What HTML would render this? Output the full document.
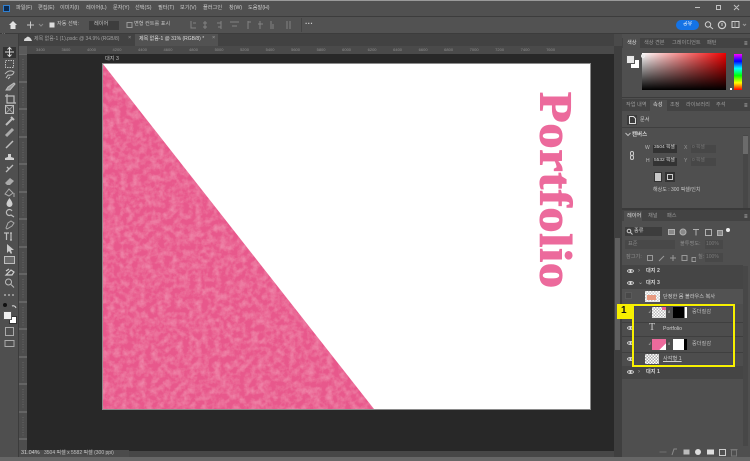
<!DOCTYPE html>
<html lang="ko"><head><meta charset="utf-8"><style>
html,body{margin:0;padding:0;width:750px;height:461px;overflow:hidden;background:#4a4a4a}
*{box-sizing:border-box}
#r{position:relative;width:750px;height:461px;overflow:hidden;font-family:"Liberation Sans","Noto Sans CJK KR",sans-serif;color:#cfcfcf;font-size:5.500px}
.a{position:absolute}
.t{position:absolute;white-space:nowrap;line-height:1;filter:blur(.35px)}
.ic{filter:blur(.35px)}
.eye{position:absolute;width:7px;height:4px;border:1px solid #cfcfcf;border-radius:50%;background:radial-gradient(circle,#ddd 1px,transparent 1.2px);filter:blur(.3px)}
.sep{position:absolute;height:1px;background:#3f3f3f}
.m{font-size:5.200px;color:#cfcfcf;top:6px}
</style></head><body><div id="r">

<!-- top bars -->
<div class="a" style="left:0;top:0;width:750px;height:1px;background:#9a9a9a"></div>
<div class="a" style="left:0;top:1px;width:750px;height:15px;background:#505050"></div>
<div class="a" style="left:0;top:16px;width:750px;height:1px;background:#3c3c3c"></div>
<div class="a" style="left:0;top:17px;width:750px;height:16px;background:#525252"></div>
<div class="a" style="left:0;top:33px;width:750px;height:1px;background:#3c3c3c"></div>
<div class="a" style="left:3px;top:5px;width:7px;height:7px;background:#0b2a50;border:1px solid #2f7fd0"></div>
<div class="t m" style="left:16px">파일(F)</div>
<div class="t m" style="left:38px">편집(E)</div>
<div class="t m" style="left:60px">이미지(I)</div>
<div class="t m" style="left:86px">레이어(L)</div>
<div class="t m" style="left:113px">문자(Y)</div>
<div class="t m" style="left:135px">선택(S)</div>
<div class="t m" style="left:158px">필터(T)</div>
<div class="t m" style="left:180px">보기(V)</div>
<div class="t m" style="left:203px">플러그인</div>
<div class="t m" style="left:229px">창(W)</div>
<div class="t m" style="left:248px">도움말(H)</div>
<svg class="a ic" style="left:695px;top:3px" width="45" height="10" fill="none" stroke="#c0c0c0"><path d="M0 4.500h5M21.500 2.500h4v4h-4zM39 2l5 5M44 2l-5 5"/></svg>

<!-- options -->
<svg class="a ic" style="left:0;top:17px" width="300" height="16" fill="none" stroke="#c8c8c8">
<path d="M9 8l4-4 4 4h-1.500v4h-5v-4z" fill="#e2e2e2" stroke="none"/>
<path d="M27 8h7M30.500 4.500v7"/>
<path d="M39 7l2 2 2-2" stroke="#888"/>
<rect x="49.500" y="5.500" width="5" height="5" fill="#ddd" stroke="none"/>
<rect x="127" y="5.500" width="5" height="5" stroke="#999"/>
<path d="M191 4v7h5M193 6h3M205 4v8M203 6h4M203 10h4M221 4v8M217 6h4M218 10h3M230 5h9M232 9h5M248 4v8M248 5h3M260 4v8M258 7h5M271 4v8M273 7v5M287 4v8M290 4v8" stroke="#828282"/>
</svg>
<div class="a" style="left:89px;top:21px;width:30px;height:9px;background:#3d3d3d"></div>
<div class="t" style="left:57px;top:22px;color:#c8c8c8;font-size:5.200px">자동 선택:</div>
<div class="t" style="left:94px;top:22px;color:#c8c8c8;font-size:5.200px">레이어</div>
<div class="t" style="left:134px;top:22px;color:#c0c0c0;font-size:5.200px">변형 컨트롤 표시</div>
<div class="t" style="left:305px;top:20px;font-size:8px;color:#ccc;font-weight:bold">···</div>
<div class="a" style="left:301px;top:18px;width:1px;height:14px;background:#444"></div>
<div class="a" style="left:676px;top:20px;width:23px;height:10px;border-radius:5px;background:#1473e6"></div>
<div class="t" style="left:683px;top:22px;color:#fff;font-size:5px">공유</div>
<svg class="a ic" style="left:702px;top:18px" width="48" height="14" fill="none" stroke="#cfcfcf"><circle cx="6" cy="6.500" r="2.700"/><path d="M8 8.500l3 2.500"/><circle cx="20" cy="7" r="3.600" stroke-width="1.200"/><path d="M20 5v3"/><rect x="30" y="3.500" width="7" height="6"/><path d="M33 3.500v6M41 6l1.500 1.500L44 6" stroke="#999"/></svg>

<!-- tabs -->
<div class="a" style="left:0;top:34px;width:614px;height:12px;background:#424242"></div>
<div class="a" style="left:135px;top:34px;width:83px;height:12px;background:#525252"></div>
<svg class="a" style="left:23px;top:35px" width="10" height="8"><path d="M1 6q0-3 2-3q1-2 3-1q2 1 3 4z" fill="#d8d8d8"/></svg>
<div class="t" style="left:34px;top:37px;font-size:5px;color:#a0a0a0">제목 없음-1 (1).psdc @ 34.9% (RGB/8)</div>
<div class="t" style="left:128px;top:36px;color:#999">×</div>
<div class="t" style="left:139px;top:37px;font-size:5px;color:#dedede">제목 없음-1 @ 31% (RGB/8) *</div>
<div class="t" style="left:212px;top:36px;color:#a0a0a0">×</div>
<div class="t" style="left:2px;top:32px;color:#ccc;font-size:5px">··</div>

<!-- toolbar -->
<div class="a" style="left:0;top:34px;width:19px;height:427px;background:#4f4f4f;border-right:1px solid #3c3c3c"></div>
<div class="a" style="left:3px;top:47px;width:13px;height:11px;background:#333"></div>
<svg class="a ic" style="left:0;top:44px" width="19" height="310" fill="none" stroke="#bdbdbd" stroke-width="1">
<path d="M5 8h9M9.500 3.500v9M7.500 5.500l2-2 2 2M7.500 10.500l2 2 2-2" stroke="#d8d8d8"/>
<rect x="5.500" y="16.500" width="8" height="7" stroke-dasharray="1.500 1"/>
<path d="M5 30q4-5 9-2q-1 4-6 3l-2 3M8 35l2-2"/>
<path d="M6 46l2-3 6-4 1 1-5 6z" fill="#999"/>
<path d="M7 50v9h9M5 52h9v7" stroke-width="1.200"/>
<rect x="5.500" y="61.500" width="8" height="8"/><path d="M6 62l7 7M13 62l-7 7" stroke="#999"/>
<path d="M6 81l6-6M11 73l3 3" stroke-width="2"/>
<path d="M6 92l7-7" stroke-width="3" stroke="#aaa"/>
<path d="M6 104l7-7" stroke-width="1.500"/>
<path d="M5 116h9v-2l-3-1v-3h-3v3l-3 1z" fill="#cfcfcf" stroke="none"/>
<path d="M6 128l7-7M7 123l2 2" stroke-width="1.300"/>
<path d="M5 139l5-5 4 3-4 4H7z" fill="#aaa" stroke="none"/>
<path d="M5 150l4-5 4 4-4 3zM14 149v4" stroke="#aaa"/>
<path d="M9.500 154q-3 4-3 6a3 3 0 0 0 6 0q0-2-3-6z" fill="#cfcfcf" stroke="none"/>
<path d="M12 167a3 3 0 1 0-1 4l3 2" stroke-width="1.200"/>
<path d="M6 184l2-5 3-2 3 2-2 3-5 3z" stroke="#aaa"/>
<path d="M4 189h5M6.500 189v7M11 189v7M10 189h2M10 196h2" stroke-width="1.200"/>
<path d="M7 200v9l2-2 2 3 1-1-1-3h3z" fill="#c8c8c8" stroke="none"/>
<rect x="4.500" y="212.500" width="10" height="7" fill="#6a6a6a"/>
<path d="M6 231l5-5 3 2-2 3zM6 227l3-2" stroke="#cfcfcf" stroke-width="1.200"/>
<circle cx="8.500" cy="238" r="3"/><path d="M11 240.500l3 3"/>
<path d="M4 251h2M8 251h2M12 251h2" stroke-width="1.200"/>
<path d="M12 262a3 3 0 0 1 4 2" stroke="#ddd"/>
<rect x="5.500" y="283.500" width="8" height="8" stroke="#aaa"/>
<rect x="5" y="296.500" width="9" height="6" stroke="#aaa"/>
</svg>
<div class="a" style="left:3px;top:303px;width:4px;height:4px;border-radius:50%;background:#111"></div>
<div class="a" style="left:9px;top:316px;width:8px;height:8px;background:#fff;border:1px solid #333"></div>
<div class="a" style="left:3px;top:311px;width:9px;height:9px;background:#efefef;border:1px solid #555"></div>

<!-- rulers -->
<div class="a" style="left:19px;top:46px;width:595px;height:8px;background:#4a4a4a"></div>
<div class="a" style="left:19px;top:46px;width:8px;height:415px;background:#4d4d4d"></div>
<div class="a" style="left:19px;top:46px;width:8px;height:8px;background:#5a5a5a"></div>
<div class="t" style="left:36px;top:48px;font-size:4px;color:#8f8f8f;word-spacing:15.500px">3400 3600 4000 4200 4400 4600 4800 5000 5200 5400 5600 5800 6000 6200 6400 6600 6800 7000 7200 7400 7600</div>
<svg class="a" style="left:19px;top:54px" width="8" height="395" stroke="#7c7c7c"><path d="M0 0h8M0 28h8M0 55h8M0 83h8M0 110h8M0 138h8M0 165h8M0 193h8M0 220h8M0 248h8M0 275h8M0 303h8M0 330h8M0 358h8M0 385h8"/><path d="M4 5v20M4 33v20M4 60v20M4 88v20M4 115v20M4 143v20M4 170v20M4 198v20M4 225v20M4 253v20M4 280v20M4 308v20M4 335v20M4 363v20" stroke="#666" stroke-dasharray="1 1.500"/></svg>

<!-- canvas area -->
<div class="a" style="left:27px;top:54px;width:587px;height:397px;background:#282828"></div>
<div class="t" style="left:105px;top:57px;font-size:5.200px;color:#c5c5c5">대지 3</div>
<svg class="a" style="left:102px;top:63px" width="490" height="348">
<defs><filter id="n" x="0" y="0" width="100%" height="100%"><feTurbulence type="fractalNoise" baseFrequency=".16" numOctaves="4" seed="4"/><feColorMatrix values="0 0 0 0 1  0 0 0 0 .6  0 0 0 0 .75  .55 0 0 0 -.2"/><feComposite in2="SourceGraphic" operator="in"/><feMerge><feMergeNode in="SourceGraphic"/><feMergeNode/></feMerge></filter></defs>
<rect x="0" y="0" width="489" height="347" fill="#8a8a8a"/>
<rect x="1" y="1" width="487" height="345" fill="#fff"/>
<path d="M1 1V346H272Z" fill="#e8598c" filter="url(#n)"/>
</svg>
<div class="t" style="left:579px;top:92px;font:bold 50px/1 'Liberation Serif',serif;color:#ec6a9c;transform-origin:0 0;transform:rotate(90deg) scaleY(.92);letter-spacing:.9px;-webkit-text-stroke:1.200px #ec6a9c;filter:none">Portfolio</div>

<!-- status -->
<div class="a" style="left:19px;top:451px;width:595px;height:6px;background:#474747"></div>
<div class="a" style="left:19px;top:450px;width:110px;height:8px;background:#4b4b4b"></div>
<div class="t" style="left:21px;top:451px;font-size:5.500px;color:#d5d5d5">31.04%</div>
<div class="t" style="left:44px;top:451px;font-size:5px;color:#c0c0c0">3504 픽셀 x 5582 픽셀 (300 ppi)</div>
<div class="a" style="left:0;top:457px;width:750px;height:4px;background:#666"></div>

<!-- scrollbar + panel column -->
<div class="a" style="left:614px;top:46px;width:8px;height:411px;background:#3f3f3f"></div>
<div class="a" style="left:615px;top:238px;width:5px;height:112px;background:#5f5f5f"></div>
<div class="a" style="left:622px;top:34px;width:128px;height:423px;background:#4f4f4f"></div>

<!-- color panel -->
<div class="a" style="left:622px;top:38px;width:128px;height:10px;background:#434343"></div>
<div class="a" style="left:623px;top:38px;width:17px;height:10px;background:#4f4f4f"></div>
<div class="t" style="left:627px;top:41px;font-size:5.200px;color:#e0e0e0">색상</div>
<div class="t" style="left:644px;top:41px;font-size:5.200px;color:#9c9c9c">색상 견본</div>
<div class="t" style="left:672px;top:41px;font-size:5.200px;color:#9c9c9c">그레이디언트</div>
<div class="t" style="left:707px;top:41px;font-size:5.200px;color:#9c9c9c">패턴</div>
<div class="t" style="left:744px;top:41px;color:#ccc;font-size:6px">≡</div>
<div class="a" style="left:631px;top:60px;width:8px;height:8px;background:#fff"></div>
<div class="a" style="left:626px;top:55px;width:9px;height:9px;background:#e8e8e8;border:1px solid #555"></div>
<div class="a" style="left:642px;top:53px;width:84px;height:37px;background:linear-gradient(to top,#000,transparent),linear-gradient(to right,#fff,#e00)"></div>
<div class="a" style="left:641px;top:54px;width:4px;height:4px;border:1px solid #eee;border-radius:50%"></div>
<div class="a" style="left:730px;top:88px;width:2px;height:2px;background:#fff"></div>
<div class="a" style="left:734px;top:54px;width:8px;height:36px;background:linear-gradient(to bottom,#f0f,#00f,#0ff,#0f0,#ff0,#f00)"></div>
<div class="a" style="left:622px;top:97px;width:128px;height:1px;background:#3c3c3c"></div>

<!-- properties -->
<div class="a" style="left:622px;top:99px;width:128px;height:12px;background:#434343"></div>
<div class="a" style="left:650px;top:100px;width:17px;height:11px;background:#4f4f4f"></div>
<div class="t" style="left:626px;top:103px;font-size:5.200px;color:#9c9c9c">작업 내역</div>
<div class="t" style="left:653px;top:103px;font-size:5.200px;color:#e0e0e0">속성</div>
<div class="t" style="left:670px;top:103px;font-size:5.200px;color:#9c9c9c">조정</div>
<div class="t" style="left:686px;top:103px;font-size:5.200px;color:#9c9c9c">라이브러리</div>
<div class="t" style="left:716px;top:103px;font-size:5.200px;color:#9c9c9c">주석</div>
<div class="t" style="left:744px;top:103px;color:#ccc;font-size:6px">≡</div>
<div class="a" style="left:627px;top:115px;width:10px;height:10px;background:#3c3c3c"></div>
<svg class="a ic" style="left:629px;top:116px" width="7" height="8" fill="none" stroke="#ddd"><path d="M.5.500h4l2 2v5h-6z"/></svg>
<div class="t" style="left:640px;top:118px;font-size:5.200px;color:#cfcfcf">문서</div>
<div class="a" style="left:622px;top:127px;width:128px;height:1px;background:#3f3f3f"></div>
<svg class="a ic" style="left:625px;top:132px" width="6" height="5" fill="none" stroke="#bbb"><path d="M.5 1l2.500 2.500L5.500 1"/></svg>
<div class="t" style="left:632px;top:133px;font-size:5.500px;font-weight:bold;color:#d4d4d4">캔버스</div>
<div class="t" style="left:645px;top:146px;font-size:5px;color:#bbb">W</div>
<div class="t" style="left:646px;top:159px;font-size:5px;color:#bbb">H</div>
<div class="a" style="left:653px;top:145px;width:24px;height:8px;background:#333"></div>
<div class="a" style="left:653px;top:158px;width:24px;height:8px;background:#333"></div>
<div class="t" style="left:654px;top:146px;font-size:4.800px;color:#d8d8d8">3504 픽셀</div>
<div class="t" style="left:654px;top:159px;font-size:4.800px;color:#d8d8d8">5532 픽셀</div>
<div class="t" style="left:684px;top:146px;font-size:5px;color:#999">X</div>
<div class="t" style="left:684px;top:159px;font-size:5px;color:#999">Y</div>
<div class="a" style="left:691px;top:145px;width:25px;height:8px;background:#474747"></div>
<div class="a" style="left:691px;top:158px;width:25px;height:8px;background:#474747"></div>
<div class="t" style="left:692px;top:146px;font-size:4.800px;color:#777">0 픽셀</div>
<div class="t" style="left:692px;top:159px;font-size:4.800px;color:#777">0 픽셀</div>
<svg class="a ic" style="left:629px;top:151px" width="6" height="9" fill="none" stroke="#ccc"><rect x="1.500" y=".5" width="3" height="4" rx="1.500"/><rect x="1.500" y="4.500" width="3" height="4" rx="1.500"/></svg>
<div class="a" style="left:654px;top:172px;width:8px;height:10px;background:#c8c8c8;border:1px solid #333"></div>
<div class="a" style="left:665px;top:172px;width:10px;height:10px;background:#333"></div>
<div class="a" style="left:667px;top:174px;width:6px;height:6px;border:1px solid #ccc"></div>
<div class="t" style="left:653px;top:188px;font-size:5px;color:#c8c8c8">해상도 : 300 픽셀/인치</div>
<div class="a" style="left:743px;top:135px;width:5px;height:73px;background:#474747"></div>
<div class="a" style="left:743px;top:136px;width:5px;height:18px;background:#6b6b6b"></div>
<div class="a" style="left:622px;top:208px;width:128px;height:2px;background:#3a3a3a"></div>

<!-- layers panel -->
<div class="a" style="left:622px;top:210px;width:128px;height:11px;background:#434343"></div>
<div class="a" style="left:624px;top:211px;width:18px;height:10px;background:#4f4f4f"></div>
<div class="t" style="left:627px;top:214px;font-size:5.200px;color:#e0e0e0">레이어</div>
<div class="t" style="left:648px;top:214px;font-size:5.200px;color:#9c9c9c">채널</div>
<div class="t" style="left:667px;top:214px;font-size:5.200px;color:#9c9c9c">패스</div>
<div class="t" style="left:744px;top:214px;color:#ccc;font-size:6px">≡</div>
<div class="a" style="left:625px;top:227px;width:37px;height:9px;background:#3d3d3d"></div>
<div class="t" style="left:634px;top:229px;font-size:5.200px;color:#c8c8c8">종류</div>
<svg class="a ic" style="left:626px;top:228px" width="7" height="7" fill="none" stroke="#ccc"><circle cx="3" cy="3" r="1.800"/><path d="M4.500 4.500l2 2"/></svg>
<svg class="a ic" style="left:668px;top:227px" width="65" height="10" fill="none" stroke="#b0b0b0"><rect x=".5" y="2.500" width="6" height="5" fill="#888"/><circle cx="15" cy="5" r="3" fill="#888"/><path d="M25 2.500h6M28 2.500v6"/><rect x="37.500" y="2.500" width="6" height="6"/><rect x="49.500" y="3.500" width="5" height="5" fill="#888"/><circle cx="60" cy="3" r="2" fill="#eee" stroke="none"/></svg>
<div class="a" style="left:625px;top:240px;width:50px;height:9px;background:#484848"></div>
<div class="t" style="left:628px;top:242px;font-size:5.200px;color:#888">표준</div>
<div class="t" style="left:680px;top:242px;font-size:5.200px;color:#8a8a8a">불투명도:</div>
<div class="a" style="left:705px;top:240px;width:18px;height:9px;background:#484848"></div>
<div class="t" style="left:706px;top:242px;font-size:5px;color:#7a7a7a">100%</div>
<div class="t" style="left:626px;top:255px;font-size:5.200px;color:#8f8f8f">잠그기:</div>
<svg class="a ic" style="left:646px;top:253px" width="50" height="10" fill="none" stroke="#999"><rect x="1.500" y="2.500" width="5" height="5"/><path d="M13 8l5-5M24 5h6M27 2v6M36 2.500h5v5h-5zM46 4.500h4v4h-4z"/></svg>
<div class="t" style="left:698px;top:255px;font-size:5.200px;color:#8a8a8a">칠:</div>
<div class="a" style="left:705px;top:253px;width:18px;height:9px;background:#484848"></div>
<div class="t" style="left:706px;top:255px;font-size:5px;color:#7a7a7a">100%</div>

<!-- layer rows -->
<div class="a" style="left:622px;top:265px;width:121px;height:12px;background:#454545"></div>
<div class="a" style="left:622px;top:277px;width:121px;height:12px;background:#454545"></div>
<div class="a" style="left:622px;top:289px;width:121px;height:15px;background:#525252"></div>
<div class="a" style="left:622px;top:304px;width:121px;height:62px;background:#4d4d4d"></div>
<div class="a" style="left:622px;top:366px;width:121px;height:13px;background:#454545"></div>
<div class="eye" style="left:627px;top:269px"></div>
<div class="eye" style="left:627px;top:281px"></div>
<div class="eye" style="left:627px;top:326px"></div>
<div class="eye" style="left:627px;top:341px"></div>
<div class="eye" style="left:627px;top:357px"></div>
<div class="eye" style="left:627px;top:370px"></div>
<div class="t" style="left:638px;top:268px;font-size:6px;color:#aaa">›</div>
<div class="t" style="left:638px;top:280px;font-size:6px;color:#aaa">⌄</div>
<div class="t" style="left:638px;top:369px;font-size:6px;color:#aaa">›</div>
<div class="t" style="left:646px;top:269px;font-size:5.200px;font-weight:bold;color:#d4d4d4">대지 2</div>
<div class="t" style="left:646px;top:281px;font-size:5.200px;font-weight:bold;color:#d4d4d4">대지 3</div>
<div class="t" style="left:646px;top:370px;font-size:5.200px;font-weight:bold;color:#d4d4d4">대지 1</div>
<div class="a" style="left:625px;top:292px;width:7px;height:7px;background:#484848;border:1px solid #5a5a5a"></div>
<div class="a" style="left:645px;top:291px;width:15px;height:11px;background:repeating-conic-gradient(#fff 0 25%,#ccc 0 50%) 0 0/3px 3px"></div>
<div class="a" style="left:647px;top:295px;width:9px;height:5px;background:#e89a80"></div>
<div class="t" style="left:663px;top:295px;font-size:5.200px;color:#cfcfcf">단정한 몸 볼라우스 복사</div>
<div class="sep" style="left:622px;top:322px;width:121px"></div>
<div class="sep" style="left:622px;top:336px;width:121px"></div>
<div class="sep" style="left:622px;top:352px;width:121px"></div>

<!-- row 1 -->
<div class="a" style="left:652px;top:307px;width:14px;height:11px;background:repeating-conic-gradient(#fff 0 25%,#bbb 0 50%) 0 0/3px 3px"></div>
<div class="a" style="left:662px;top:307px;width:4px;height:3px;background:#e9608f"></div>
<div class="a" style="left:673px;top:307px;width:14px;height:11px;background:linear-gradient(to right,#000 82%,#fff 82%)"></div>
<div class="t" style="left:692px;top:310px;font-size:5.200px;color:#bdbdbd">중더질감</div>
<div class="t" style="left:668px;top:310px;font-size:4px;color:#bbb">8</div>
<div class="t" style="left:648px;top:310px;font-size:4px;color:#bbb">↲</div>
<!-- row 2 -->
<div class="t" style="left:649px;top:323px;font:10px/1 'Liberation Serif',serif;color:#d0d0d0">T</div>
<div class="t" style="left:663px;top:327px;font-size:5.200px;color:#cfcfcf">Portfolio</div>
<!-- row 3 -->
<div class="a" style="left:652px;top:339px;width:14px;height:11px;background:linear-gradient(135deg,#ec6a9c 72%,#fff 72%)"></div>
<div class="a" style="left:673px;top:339px;width:11px;height:11px;background:#fff"></div>
<div class="a" style="left:684px;top:339px;width:3px;height:11px;background:#000"></div>
<div class="t" style="left:692px;top:342px;font-size:5.200px;color:#bdbdbd">중더질감</div>
<div class="t" style="left:668px;top:342px;font-size:4px;color:#bbb">8</div>
<div class="t" style="left:648px;top:342px;font-size:4px;color:#bbb">↲</div>
<!-- row 4 -->
<div class="a" style="left:645px;top:354px;width:14px;height:10px;background:repeating-conic-gradient(#fff 0 25%,#aaa 0 50%) 0 0/3px 3px"></div>
<div class="t" style="left:663px;top:357px;font-size:5.200px;color:#cfcfcf;text-decoration:underline">사각형 1</div>

<!-- yellow highlight -->
<div class="a" style="left:632px;top:304px;width:103px;height:63px;border:2px solid #f7f000;box-shadow:inset 0 0 0 .5px #3a3a6a"></div>
<div class="a" style="left:617px;top:304px;width:16px;height:15px;background:#f7f000"></div>
<div class="t" style="left:621px;top:306px;font-size:10px;font-weight:bold;color:#111;filter:none">1</div>

<!-- footer icons -->
<svg class="a ic" style="left:659px;top:447px" width="80" height="10" fill="none" stroke="#8a8a8a"><path d="M.5 5h7" stroke="#6f6f6f"/><path d="M13 8l2-6h3"/><rect x="24.500" y="2.500" width="6" height="5" fill="#bbb" stroke="none"/><circle cx="39" cy="5" r="3" fill="#ddd" stroke="none"/><rect x="48" y="2.500" width="7" height="5" fill="#ddd" stroke="none"/><rect x="60.500" y="2.500" width="6" height="6" stroke="#ccc"/><path d="M72.500 3h5v6h-5zM71.500 2.500h7" stroke="#777"/></svg>
<div class="a" style="left:743px;top:266px;width:5px;height:180px;background:#474747"></div>
</div></body></html>
